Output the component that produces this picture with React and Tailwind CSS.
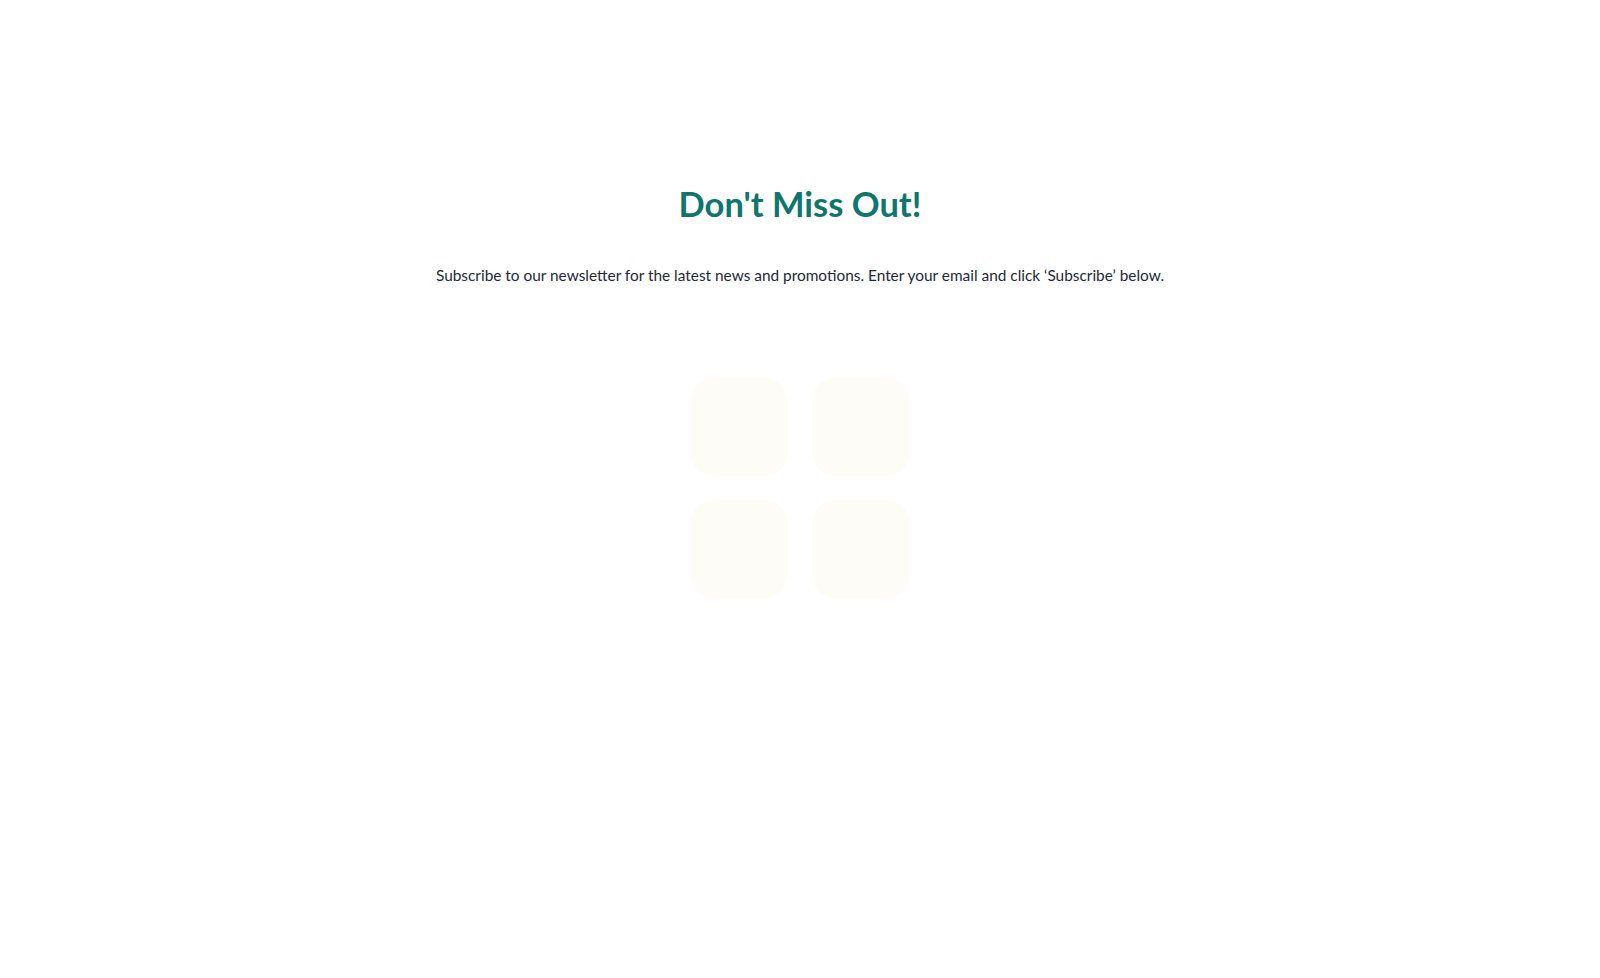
export default function App() {
  return (
    <div
      className="min-h-screen bg-white flex flex-col items-center"
      style={{ fontFamily: "Lato, 'Noto Sans', sans-serif" }}
    >
      <h2 className="mt-[181px] text-[34.5px] leading-[46px] font-bold text-[#0f766e]">
        Don't Miss Out!
      </h2>
      <p className="mt-[36px] text-[15.4px] leading-[24px] text-[#1e293b]">
        Subscribe to our newsletter for the latest news and promotions. Enter your email and click ‘Subscribe’ below.
      </p>
      <div className="mt-[91px] grid grid-cols-2 gap-6">
        <div className="w-[98px] h-[98px] rounded-3xl bg-[#fefcf6]" />
        <div className="w-[98px] h-[98px] rounded-3xl bg-[#fefcf6]" />
        <div className="w-[98px] h-[98px] rounded-3xl bg-[#fefcf6]" />
        <div className="w-[98px] h-[98px] rounded-3xl bg-[#fefcf6]" />
      </div>
    </div>
  );
}
